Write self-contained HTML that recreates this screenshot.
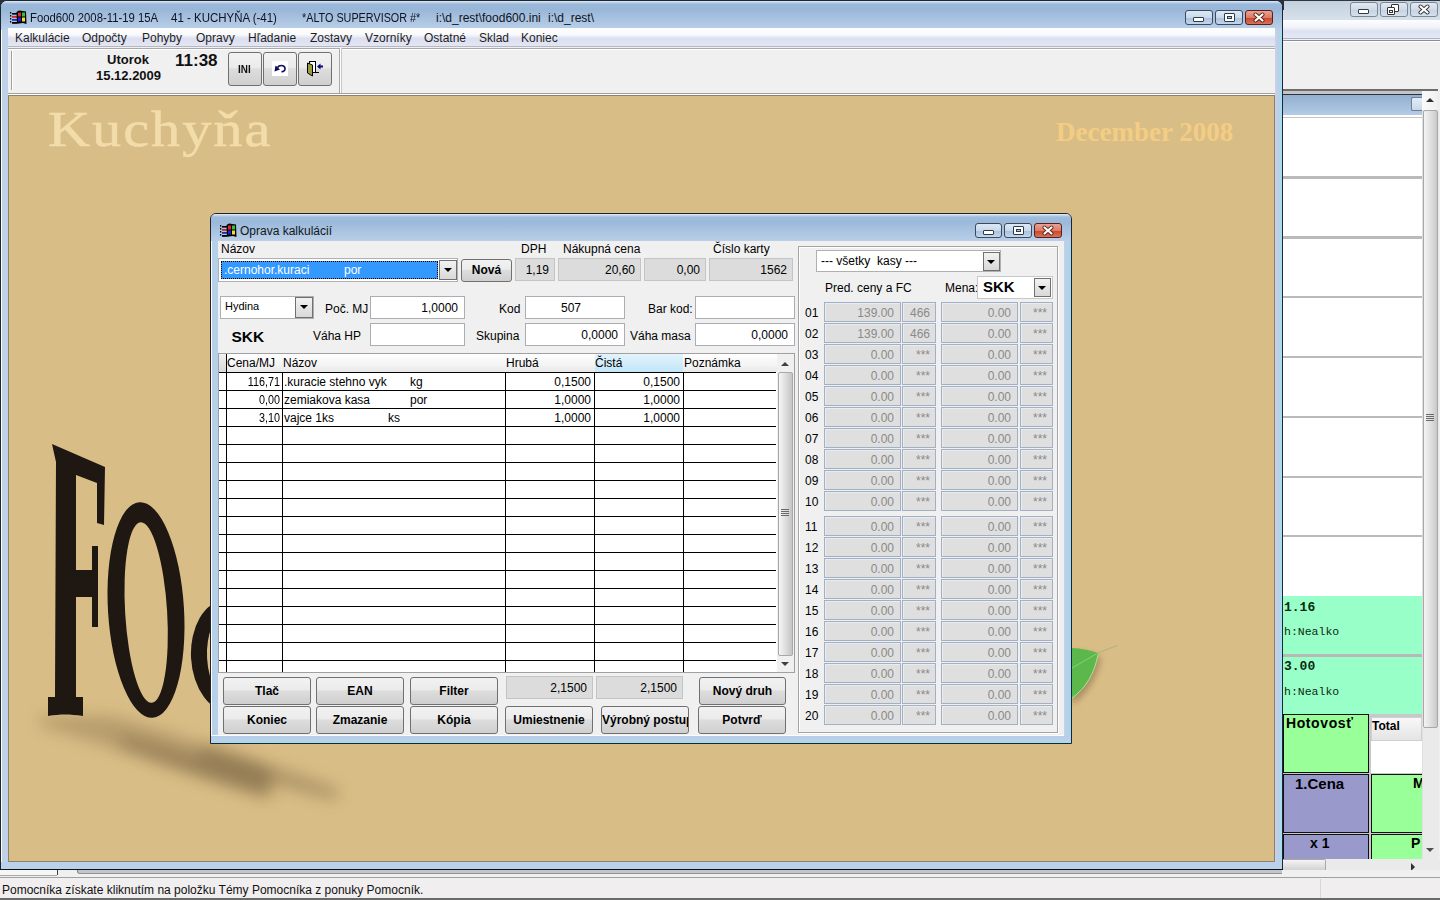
<!DOCTYPE html>
<html><head><meta charset="utf-8"><style>
*{box-sizing:border-box;margin:0;padding:0}
html,body{width:1440px;height:900px;overflow:hidden;background:#f0f0f0;font-family:"Liberation Sans",sans-serif;font-size:12px;color:#000}
.a{position:absolute}
.t{position:absolute;white-space:pre;line-height:1}
.btn{position:absolute;border:1px solid #707070;border-radius:3px;background:linear-gradient(#f2f2f2 0%,#ebebeb 45%,#dddddd 50%,#cfcfcf 100%);font-weight:bold;font-size:12px;text-align:center;white-space:pre;overflow:hidden}
.inp{position:absolute;background:#fff;border:1px solid #abadb3;border-top-color:#abadb3}
.ro{position:absolute;background:#dcdcdc;border:1px solid #c4c4c4}
.pb{position:absolute;background:#dfdfdf;border:1px solid #a3afc2;box-shadow:inset 1px 1px 0 #e8ecf3;color:#8a8a8a;font-size:12px;text-align:right;white-space:pre}
.cap{position:absolute;border:1px solid #3c4a5c;border-radius:3px;background:linear-gradient(#dce8f5 0%,#c9d9ec 50%,#a9c0dc 52%,#c3d6ec 100%)}
.capx{position:absolute;border:1px solid #5a1f16;border-radius:3px;background:linear-gradient(#eaa393 0%,#dc7b66 50%,#c8452a 52%,#d9735a 100%)}
</style></head><body>
<div class="a" style="left:1282px;top:0px;width:158px;height:877px;background:#f0f0f0"></div>
<div class="a" style="left:1282px;top:0px;width:158px;height:1px;background:#30363f"></div>
<div class="a" style="left:1282px;top:1px;width:158px;height:19px;background:linear-gradient(#c4d0de,#d6e1ea)"></div>
<div class="a" style="left:1282px;top:20px;width:158px;height:19px;background:linear-gradient(#fcfdff 0%,#f3f5fa 35%,#dde2f1 60%,#e6e9f7 100%)"></div>
<div class="a" style="left:1282px;top:38px;width:158px;height:1px;background:#b0b4bc"></div>
<div class="a" style="left:1282px;top:39px;width:158px;height:1px;background:#eef0f4"></div>
<div class="a" style="left:1282px;top:40px;width:158px;height:1px;background:#8a8e92"></div>
<div class="a" style="left:1282px;top:41px;width:158px;height:1px;background:#ffffff"></div>
<div class="a" style="left:1282px;top:42px;width:158px;height:48px;background:#f0f0f0"></div>
<div class="a" style="left:1282px;top:89px;width:156px;height:2px;background:#6d6d6d"></div>
<div class="a" style="left:1282px;top:91px;width:140px;height:3px;background:#c4c4c4"></div>
<div class="a" style="left:1282px;top:94px;width:140px;height:1px;background:#2b3440"></div>
<div class="a" style="left:1282px;top:95px;width:140px;height:20px;background:linear-gradient(#93aed0,#b3cbe5)"></div>
<div class="a" style="left:1282px;top:115px;width:140px;height:2px;background:#fff"></div>
<div class="a" style="left:1282px;top:117px;width:140px;height:1px;background:#c8c4bd"></div>
<div class="a" style="left:1282px;top:118px;width:140px;height:478px;background:#fff"></div>
<div class="a" style="left:1283px;top:176px;width:139px;height:3px;background:#bababa"></div>
<div class="a" style="left:1283px;top:236px;width:139px;height:3px;background:#bababa"></div>
<div class="a" style="left:1283px;top:296px;width:139px;height:2px;background:#bababa"></div>
<div class="a" style="left:1283px;top:356px;width:139px;height:2px;background:#bababa"></div>
<div class="a" style="left:1283px;top:416px;width:139px;height:2px;background:#bababa"></div>
<div class="a" style="left:1283px;top:476px;width:139px;height:2px;background:#bababa"></div>
<div class="a" style="left:1283px;top:535px;width:139px;height:2px;background:#bababa"></div>
<div class="a" style="left:1283px;top:596px;width:139px;height:58px;background:#99ffc8"></div>
<div class="a" style="left:1283px;top:654px;width:139px;height:3px;background:#b8b8b8"></div>
<div class="a" style="left:1283px;top:657px;width:139px;height:57px;background:#99ffc8"></div>
<div class="t" style="left:1284px;top:601px;font-family:'Liberation Mono';font-weight:bold;font-size:13px;color:#0a2a10">1.16</div>
<div class="t" style="left:1284px;top:626px;font-family:'Liberation Mono';font-size:11.5px;color:#0a2a10">h:Nealko</div>
<div class="t" style="left:1284px;top:660px;font-family:'Liberation Mono';font-weight:bold;font-size:13px;color:#0a2a10">3.00</div>
<div class="t" style="left:1284px;top:686px;font-family:'Liberation Mono';font-size:11.5px;color:#0a2a10">h:Nealko</div>
<div class="a" style="left:1283px;top:714px;width:139px;height:146px;background:#c8c8c8"></div>
<div class="a" style="left:1283px;top:714px;width:86px;height:59px;background:#99ff99;border:1px solid #111"></div>
<div class="t" style="left:1286px;top:716px;font-weight:bold;font-size:14px;letter-spacing:0.6px">Hotovosť</div>
<div class="a" style="left:1371px;top:717px;width:51px;height:24px;background:linear-gradient(#f8f8f8,#e4e4e4);border:1px solid #d0d0d0"></div>
<div class="t" style="left:1372px;top:720px;font-weight:bold;font-size:12px">Total</div>
<div class="a" style="left:1371px;top:741px;width:51px;height:32px;background:#fff"></div>
<div class="a" style="left:1283px;top:774px;width:86px;height:59px;background:#9999cc;border:1px solid #111"></div>
<div class="t" style="left:1295px;top:776px;font-weight:bold;font-size:15px">1.Cena</div>
<div class="a" style="left:1371px;top:774px;width:51px;height:59px;background:#99ff99;border:1px solid #111;border-right:none"></div>
<div class="t" style="left:1413px;top:776px;font-weight:bold;font-size:14px">M</div>
<div class="a" style="left:1283px;top:834px;width:86px;height:27px;background:#9999cc;border:1px solid #111;border-bottom:none"></div>
<div class="t" style="left:1310px;top:836px;font-weight:bold;font-size:14px">x 1</div>
<div class="a" style="left:1371px;top:834px;width:51px;height:27px;background:#99ff99;border:1px solid #111;border-right:none;border-bottom:none"></div>
<div class="t" style="left:1411px;top:836px;font-weight:bold;font-size:14px">P</div>
<div class="a" style="left:1422px;top:91px;width:17px;height:769px;background:#eaeaea;border-left:1px solid #e0e0e0"></div>
<div class="a" style="left:1423px;top:110px;width:15px;height:618px;background:linear-gradient(90deg,#f4f4f4,#dcdcdc 60%,#c8c8c8);border:1px solid #a8a8a8;border-radius:2px"></div>
<div class="a" style="left:1422px;top:91px;width:16px;height:19px;background:linear-gradient(90deg,#fafafa,#f0f0f0)"></div>
<div class="a" style="left:1426px;top:414px;width:8px;height:1px;background:#6a6a6a"></div>
<div class="a" style="left:1426px;top:416px;width:8px;height:1px;background:#6a6a6a"></div>
<div class="a" style="left:1426px;top:418px;width:8px;height:1px;background:#6a6a6a"></div>
<div class="a" style="left:1426px;top:420px;width:8px;height:1px;background:#6a6a6a"></div>
<div class="a" style="left:1426px;top:98px;width:0;height:0;border-left:4px solid transparent;border-right:4px solid transparent;border-bottom:4px solid #303030"></div>
<div class="a" style="left:1426px;top:848px;width:0;height:0;border-left:4px solid transparent;border-right:4px solid transparent;border-top:4px solid #505050"></div>
<div class="a" style="left:1411px;top:97px;width:11px;height:14px;background:linear-gradient(#e4ecf6,#c8d8ea);border:1px solid #6f8199;border-right:none;border-radius:2px 0 0 2px"></div>
<div class="a" style="left:1282px;top:859px;width:158px;height:16px;background:#eaeaea"></div>
<div class="a" style="left:1282px;top:859px;width:44px;height:15px;background:linear-gradient(#f4f4f4,#dadada 60%,#c8c8c8);border:1px solid #a8a8a8;border-left:none;border-radius:0 2px 2px 0"></div>
<div class="a" style="left:1411px;top:863px;width:0;height:0;border-top:4px solid transparent;border-bottom:4px solid transparent;border-left:4px solid #303030"></div>
<div class="cap" style="left:1350px;top:2px;width:28px;height:15px;border-color:#7b8796;background:linear-gradient(#e2e9f1,#d0dbe7 50%,#c4d2e1 52%,#d6e1ec)"></div>
<div class="cap" style="left:1380px;top:2px;width:28px;height:15px;border-color:#7b8796;background:linear-gradient(#e2e9f1,#d0dbe7 50%,#c4d2e1 52%,#d6e1ec)"></div>
<div class="cap" style="left:1410px;top:2px;width:28px;height:15px;border-color:#7b8796;background:linear-gradient(#e2e9f1,#d0dbe7 50%,#c4d2e1 52%,#d6e1ec)"></div>
<div class="a" style="left:1358px;top:9px;width:11px;height:5px;background:#fff;border:1px solid #2c3a4c;border-radius:1px"></div>
<div class="a" style="left:1391px;top:4px;width:8px;height:8px;background:#fff;border:1.5px solid #333;border-radius:1px"></div>
<div class="a" style="left:1387px;top:7px;width:8px;height:8px;background:#fff;border:1.5px solid #333;border-radius:1px"></div>
<div class="a" style="left:1389px;top:10px;width:4px;height:3px;background:#fff;border:1px solid #333"></div>
<svg class="a" style="left:1418px;top:4px" width="12" height="11" viewBox="0 0 12 11"><path d="M2.5,2.5 L9.5,8.5 M9.5,2.5 L2.5,8.5" stroke="#333" stroke-width="4" stroke-linecap="round"/><path d="M2.5,2.5 L9.5,8.5 M9.5,2.5 L2.5,8.5" stroke="#fff" stroke-width="2.2" stroke-linecap="round"/></svg>
<div class="a" style="left:0px;top:0px;width:10px;height:10px;background:#2a3038"></div>
<div class="a" style="left:1272px;top:0px;width:12px;height:10px;background:#2a3038"></div>
<div class="a" style="left:0px;top:0px;width:1283px;height:870px;background:#b9d1ea;border:1px solid #1d2633;border-radius:7px 7px 0 0"></div>
<div class="a" style="left:1px;top:1px;width:1281px;height:28px;background:linear-gradient(#dfe9f4 0px,#9cb9da 3px,#98b6d8 8px,#b8cee8 27px);border-radius:6px 6px 0 0"></div>
<div class="a" style="left:1px;top:30px;width:7px;height:840px;background:linear-gradient(90deg,#ffffff 0,#ffffff 1px,#bdd3e3 1px,#bfd0ee 7px)"></div>
<div class="a" style="left:1275px;top:30px;width:7px;height:840px;background:linear-gradient(90deg,#c9d2e4,#b8cfe8 50%,#a3e0f4)"></div>
<div class="a" style="left:1px;top:862px;width:1281px;height:7px;background:#b9d1ea"></div>
<div class="a" style="left:0px;top:869px;width:1283px;height:1px;background:#111"></div>
<div class="a" style="left:8px;top:28px;width:1267px;height:19px;background:linear-gradient(#ffffff 0%,#f8f9fc 35%,#dcdff0 55%,#e4e6f4 100%)"></div>
<div class="a" style="left:8px;top:46px;width:1267px;height:1px;background:#b4b8c0"></div>
<div class="a" style="left:8px;top:47px;width:1267px;height:48px;background:#f0f0f0"></div>
<div class="a" style="left:8px;top:48px;width:1267px;height:1px;background:#a8a8a8"></div>
<div class="a" style="left:8px;top:49px;width:1267px;height:1px;background:#ffffff"></div>
<div class="a" style="left:11px;top:51px;width:2px;height:39px;background:linear-gradient(90deg,#a0a0a0 50%,#fff 50%)"></div>
<div class="a" style="left:339px;top:48px;width:1px;height:46px;background:#a8a8a8"></div>
<div class="a" style="left:340px;top:48px;width:1px;height:46px;background:#fff"></div>
<div class="a" style="left:341px;top:48px;width:1px;height:46px;background:#c8c8c8"></div>
<div class="a" style="left:8px;top:93px;width:1267px;height:1px;background:#a0a0a0"></div>
<div class="a" style="left:8px;top:94px;width:1267px;height:1px;background:#fff"></div>
<div class="a" style="left:8px;top:95px;width:1267px;height:767px;background:#d9bd86;border:1px solid #8f8168"></div>
<div class="t" style="left:48px;top:104px;font-family:'Liberation Serif';font-size:50px;letter-spacing:1.6px;color:#f2dcaa;transform:scaleX(1.17);transform-origin:0 0;-webkit-text-stroke:0.5px #f2dcaa">Kuchyňa</div>
<div class="t" style="left:1056px;top:118.5px;font-family:'Liberation Serif';font-weight:bold;font-size:27px;color:#f4cd84">December 2008</div>
<svg class="a" style="left:0;top:0" width="1280" height="870" viewBox="0 0 1280 870">
<defs>
<filter id="blur8" x="-50%" y="-50%" width="200%" height="200%"><feGaussianBlur stdDeviation="8"/></filter>
<filter id="blur3" x="-50%" y="-50%" width="200%" height="200%"><feGaussianBlur stdDeviation="3"/></filter>
</defs>
<path d="M40,716 L110,716 C160,728 220,748 270,770 L270,800 C200,780 120,748 40,726 Z" fill="#7a6440" opacity="0.35" filter="url(#blur8)"/>
<path d="M120,735 C170,748 220,762 270,778 L270,795 C220,782 170,765 120,745 Z" fill="#5e4c30" opacity="0.35" filter="url(#blur8)"/>
<path d="M200,745 C240,755 290,770 340,790 L335,800 C290,790 240,775 200,760 Z" fill="#5e4c30" opacity="0.35" filter="url(#blur8)"/>
<path fill="#1e1712" d="M52,444 L105,467 L104,525 L97,523 L97,483 L76,475 L76,570 L92,570 L92,546 L98,546 L98,627 L92,627 L92,597 L76,597 L76,697 L83,697 L83,716 C70,714 60,714 48,716 L48,697 L55,697 L56,462 Z"/>
<g transform="rotate(-3.5 146 610)"><ellipse cx="146" cy="610" rx="38" ry="108" fill="#1e1712"/><ellipse cx="146" cy="612.5" rx="21" ry="90.5" fill="#d9bd86"/></g>
<g transform="rotate(-3 228 656)"><ellipse cx="228" cy="656" rx="37" ry="56" fill="#1e1712"/><ellipse cx="229" cy="657" rx="22" ry="44" fill="#d9bd86"/></g>
<path d="M1072,652 C1082,652 1092,654 1101,657 C1098,676 1088,694 1072,705 Z" fill="#6e5a3a" opacity="0.45" filter="url(#blur3)"/>
<path fill="#5db84c" d="M1070,648 C1080,648 1090,650 1098,653 C1095,672 1085,690 1070,700 Z"/>
<path d="M1098,653 L1118,645" stroke="#a9b77a" stroke-width="1" fill="none"/>
<path d="M1072,668 L1098,653" stroke="#86cf78" stroke-width="1" fill="none"/>
<path d="M1072,698 C1086,688 1094,674 1098,655" stroke="#a8e39a" stroke-width="1" fill="none"/>
</svg>
<svg class="a" style="left:10px;top:10px" width="17" height="15" viewBox="0 0 17 15">
<rect x="0" y="2" width="1.3" height="1.6" fill="#000"/><rect x="0" y="5" width="1.3" height="1.6" fill="#000"/><rect x="0" y="8" width="1.3" height="1.6" fill="#000"/><rect x="0" y="11" width="1.3" height="1.6" fill="#000"/>
<rect x="2" y="3" width="5" height="1.6" fill="#000"/><rect x="2" y="6" width="5" height="1.8" fill="#d42020"/><rect x="2" y="9" width="5" height="1.8" fill="#1c2cb0"/><rect x="2" y="12" width="5" height="1.8" fill="#000"/>
<path d="M6.5,2 L9,0.5 L16,1.5 L16.5,14 L13,13 L7,13.8 Z" fill="#000"/>
<rect x="8" y="2.5" width="3" height="4" fill="#e02828"/><rect x="12" y="2.5" width="3" height="4" fill="#30c040"/>
<rect x="8" y="7.5" width="3" height="4" fill="#2020c8"/><rect x="12" y="7.5" width="3" height="4" fill="#f0e030"/>
</svg>
<div class="t" style="left:30px;top:12px;font-size:12px;color:#0c1420;transform:scaleX(0.942);transform-origin:0 0">Food600 2008-11-19 15A</div>
<div class="t" style="left:171px;top:12px;font-size:12px;color:#0c1420;transform:scaleX(0.957);transform-origin:0 0">41 - KUCHYŇA (-41)</div>
<div class="t" style="left:302px;top:12px;font-size:12px;color:#0c1420;transform:scaleX(0.9);transform-origin:0 0">*ALTO SUPERVISOR #*</div>
<div class="t" style="left:436px;top:12px;font-size:12px;color:#0c1420;transform:scaleX(1.0);transform-origin:0 0">i:\d_rest\food600.ini</div>
<div class="t" style="left:548px;top:12px;font-size:12px;color:#0c1420;transform:scaleX(1.0);transform-origin:0 0">i:\d_rest\</div>
<div class="t" style="left:15px;top:32px;font-size:12px;color:#1e1e1e">Kalkulácie</div>
<div class="t" style="left:82px;top:32px;font-size:12px;color:#1e1e1e">Odpočty</div>
<div class="t" style="left:142px;top:32px;font-size:12px;color:#1e1e1e">Pohyby</div>
<div class="t" style="left:196px;top:32px;font-size:12px;color:#1e1e1e">Opravy</div>
<div class="t" style="left:248px;top:32px;font-size:12px;color:#1e1e1e">Hľadanie</div>
<div class="t" style="left:310px;top:32px;font-size:12px;color:#1e1e1e">Zostavy</div>
<div class="t" style="left:365px;top:32px;font-size:12px;color:#1e1e1e">Vzorníky</div>
<div class="t" style="left:424px;top:32px;font-size:12px;color:#1e1e1e">Ostatné</div>
<div class="t" style="left:479px;top:32px;font-size:12px;color:#1e1e1e">Sklad</div>
<div class="t" style="left:521px;top:32px;font-size:12px;color:#1e1e1e">Koniec</div>
<div class="cap" style="left:1185px;top:10px;width:28px;height:15px"></div>
<div class="cap" style="left:1215px;top:10px;width:28px;height:15px"></div>
<div class="capx" style="left:1245px;top:10px;width:28px;height:15px"></div>
<div class="a" style="left:1193px;top:17px;width:11px;height:5px;background:#fff;border:1px solid #2c3a4c;border-radius:1px"></div>
<div class="a" style="left:1224px;top:13px;width:11px;height:9px;background:#fff;border:1px solid #2c3a4c;border-radius:1px"></div>
<div class="a" style="left:1227px;top:16px;width:5px;height:3px;background:#b8c8dc;border:1px solid #2c3a4c"></div>
<svg class="a" style="left:1253px;top:12px" width="12" height="11" viewBox="0 0 12 11"><path d="M2.5,2.5 L9.5,8.5 M9.5,2.5 L2.5,8.5" stroke="#5a2418" stroke-width="4" stroke-linecap="round"/><path d="M2.5,2.5 L9.5,8.5 M9.5,2.5 L2.5,8.5" stroke="#fff" stroke-width="2.2" stroke-linecap="round"/></svg>
<div class="t" style="left:107px;top:53px;font-weight:bold;font-size:13px;color:#111">Utorok</div>
<div class="t" style="left:96px;top:69px;font-weight:bold;font-size:13px;color:#111">15.12.2009</div>
<div class="t" style="left:175px;top:52px;font-weight:bold;font-size:17px;color:#111">11:38</div>
<div class="btn" style="left:228px;top:52px;width:34px;height:34px"></div>
<div class="btn" style="left:263px;top:52px;width:34px;height:34px"></div>
<div class="btn" style="left:298px;top:52px;width:34px;height:34px"></div>
<div class="t" style="left:238px;top:64px;font-weight:bold;font-size:11px;color:#111;transform:scaleX(0.9);transform-origin:0 0">INI</div>
<div class="a" style="left:272px;top:61px;width:16px;height:15px;background:#fff"></div>
<svg class="a" style="left:272px;top:61px" width="16" height="15" viewBox="0 0 16 15"><path d="M5.5,6.5 C7,4 12,3.5 13,7 C13.6,9.5 11,11 9.5,10.5" stroke="#0a0a60" stroke-width="1.6" fill="none"/><path d="M2.5,10.5 L3.5,4.5 L8,8.5 Z" fill="#0a0a60"/></svg>
<svg class="a" style="left:306px;top:60px" width="19" height="17" viewBox="0 0 19 17"><rect x="3.5" y="1.5" width="6" height="11" fill="#fff" stroke="#000" stroke-width="1"/><path d="M9.5,12.5 L13,12.5" stroke="#000" stroke-width="1"/><path d="M1.5,3 L6.5,5 L6.5,16 L1.5,13 Z" fill="#9c9c3a" stroke="#000" stroke-width="1"/><path d="M17,6.5 L13,6.5" stroke="#0a0a80" stroke-width="2"/><path d="M11,6.5 L14.5,3.5 L14.5,9.5 Z" fill="#0a0a80"/></svg>
<div class="a" style="left:210px;top:213px;width:862px;height:531px;background:#b7d0ea;border:1px solid #1c2530;border-radius:6px 6px 0 0"></div>
<div class="a" style="left:211px;top:214px;width:860px;height:27px;background:linear-gradient(#e4edf6 0px,#a0bcdc 3px,#9cb9da 8px,#b9cfe8 27px);border-radius:5px 5px 0 0"></div>
<div class="a" style="left:218px;top:241px;width:846px;height:495px;background:#f0f0f0"></div>
<div class="a" style="left:211px;top:241px;width:1px;height:495px;background:#fff"></div>
<div class="a" style="left:211px;top:735px;width:860px;height:1px;background:#fbfbfb"></div>
<div class="a" style="left:211px;top:736px;width:860px;height:7px;background:linear-gradient(#b9cde7,#b6d4ec 60%,#a6dcf0)"></div>
<div class="a" style="left:1064px;top:241px;width:7px;height:495px;background:linear-gradient(90deg,#bfd2ea,#b5d0ea 60%,#9fd8ee)"></div>
<div class="t" style="left:240px;top:225px;font-size:12px;color:#101820">Oprava kalkulácií</div>
<div class="cap" style="left:975px;top:223px;width:27px;height:15px"></div>
<div class="cap" style="left:1004px;top:223px;width:28px;height:15px"></div>
<div class="capx" style="left:1034px;top:223px;width:28px;height:15px"></div>
<div class="a" style="left:983px;top:230px;width:11px;height:5px;background:#fff;border:1px solid #2c3a4c;border-radius:1px"></div>
<div class="a" style="left:1013px;top:226px;width:11px;height:9px;background:#fff;border:1px solid #2c3a4c;border-radius:1px"></div>
<div class="a" style="left:1016px;top:229px;width:5px;height:3px;background:#b8c8dc;border:1px solid #2c3a4c"></div>
<svg class="a" style="left:1042px;top:225px" width="12" height="11" viewBox="0 0 12 11"><path d="M2.5,2.5 L9.5,8.5 M9.5,2.5 L2.5,8.5" stroke="#5a2418" stroke-width="4" stroke-linecap="round"/><path d="M2.5,2.5 L9.5,8.5 M9.5,2.5 L2.5,8.5" stroke="#fff" stroke-width="2.2" stroke-linecap="round"/></svg>
<svg class="a" style="left:220px;top:223px" width="17" height="15" viewBox="0 0 17 15">
<rect x="0" y="2" width="1.3" height="1.6" fill="#000"/><rect x="0" y="5" width="1.3" height="1.6" fill="#000"/><rect x="0" y="8" width="1.3" height="1.6" fill="#000"/><rect x="0" y="11" width="1.3" height="1.6" fill="#000"/>
<rect x="2" y="3" width="5" height="1.6" fill="#000"/><rect x="2" y="6" width="5" height="1.8" fill="#d42020"/><rect x="2" y="9" width="5" height="1.8" fill="#1c2cb0"/><rect x="2" y="12" width="5" height="1.8" fill="#000"/>
<path d="M6.5,2 L9,0.5 L16,1.5 L16.5,14 L13,13 L7,13.8 Z" fill="#000"/>
<rect x="8" y="2.5" width="3" height="4" fill="#e02828"/><rect x="12" y="2.5" width="3" height="4" fill="#30c040"/>
<rect x="8" y="7.5" width="3" height="4" fill="#2020c8"/><rect x="12" y="7.5" width="3" height="4" fill="#f0e030"/>
</svg>
<div class="t" style="left:221px;top:243px;">Názov</div>
<div class="t" style="left:521px;top:243px;">DPH</div>
<div class="t" style="left:563px;top:243px;">Nákupná cena</div>
<div class="t" style="left:713px;top:243px;">Číslo karty</div>
<div class="a" style="left:218px;top:258px;width:240px;height:24px;background:#fff;border:1px solid #b0b0b0"></div>
<div class="a" style="left:221px;top:261px;width:217px;height:18px;background:#3399ff;outline:1px dotted #000;outline-offset:-1px"></div>
<div class="t" style="left:224px;top:264px;color:#fff">.cernohor.kuraci</div>
<div class="t" style="left:344px;top:264px;color:#fff">por</div>
<div class="a" style="left:439px;top:260px;width:18px;height:20px;background:linear-gradient(#f2f2f2,#d8d8d8);border:1px solid #707070"></div>
<div class="a" style="left:444px;top:268px;width:0;height:0;border-left:4px solid transparent;border-right:4px solid transparent;border-top:4px solid #000"></div>
<div class="btn" style="left:461px;top:259px;width:51px;height:23px;line-height:21px">Nová</div>
<div class="ro" style="left:515px;top:258px;width:40px;height:23px;text-align:right;padding-right:5px;line-height:23px">1,19</div>
<div class="ro" style="left:558px;top:258px;width:83px;height:23px;text-align:right;padding-right:5px;line-height:23px">20,60</div>
<div class="ro" style="left:644px;top:258px;width:62px;height:23px;text-align:right;padding-right:5px;line-height:23px">0,00</div>
<div class="ro" style="left:709px;top:258px;width:84px;height:23px;text-align:right;padding-right:5px;line-height:23px">1562</div>
<div class="a" style="left:220px;top:296px;width:94px;height:23px;background:#fff;border:1px solid #b0b0b0"></div>
<div class="t" style="left:225px;top:301px;font-size:11px">Hydina</div>
<div class="a" style="left:295px;top:297px;width:18px;height:21px;background:linear-gradient(#f2f2f2,#d8d8d8);border:1px solid #707070"></div>
<div class="a" style="left:300px;top:305px;width:0;height:0;border-left:4px solid transparent;border-right:4px solid transparent;border-top:4px solid #000"></div>
<div class="t" style="left:325px;top:303px;">Poč. MJ</div>
<div class="t" style="left:313px;top:330px;">Váha HP</div>
<div class="t" style="left:231.5px;top:329px;font-weight:bold;font-size:15.5px">SKK</div>
<div class="inp" style="left:370px;top:296px;width:95px;height:23px;text-align:right;padding-right:6px;line-height:23px">1,0000</div>
<div class="inp" style="left:370px;top:323px;width:95px;height:23px"></div>
<div class="t" style="left:499px;top:303px;">Kod</div>
<div class="t" style="left:476px;top:330px;">Skupina</div>
<div class="inp" style="left:525px;top:296px;width:100px;height:23px;text-align:center;padding-right:8px;line-height:23px">507</div>
<div class="inp" style="left:525px;top:323px;width:100px;height:23px;text-align:right;padding-right:6px;line-height:23px">0,0000</div>
<div class="t" style="left:648px;top:303px;">Bar kod:</div>
<div class="t" style="left:630px;top:330px;">Váha masa</div>
<div class="inp" style="left:695px;top:296px;width:100px;height:23px"></div>
<div class="inp" style="left:695px;top:323px;width:100px;height:23px;text-align:right;padding-right:6px;line-height:23px">0,0000</div>
<div class="a" style="left:218px;top:353px;width:577px;height:320px;background:#fff;border:1px solid #a0a0a0"></div>
<div class="a" style="left:219px;top:354px;width:575px;height:18px;background:linear-gradient(#ffffff,#f4f4f4 60%,#e8e8e8)"></div>
<div class="a" style="left:219px;top:354px;width:7px;height:18px;background:linear-gradient(#f0f0f0,#d8d8d8)"></div>
<div class="a" style="left:595px;top:354px;width:88px;height:18px;background:linear-gradient(#e3f4fc,#c2e6f9)"></div>
<div class="t" style="left:227px;top:357px;">Cena/MJ</div>
<div class="t" style="left:283px;top:357px;">Názov</div>
<div class="t" style="left:506px;top:357px;">Hrubá</div>
<div class="t" style="left:595px;top:357px;">Čistá</div>
<div class="t" style="left:684px;top:357px;">Poznámka</div>
<div class="a" style="left:219px;top:372px;width:557px;height:1px;background:#000"></div>
<div class="a" style="left:219px;top:390px;width:557px;height:1px;background:#000"></div>
<div class="a" style="left:219px;top:408px;width:557px;height:1px;background:#000"></div>
<div class="a" style="left:219px;top:426px;width:557px;height:1px;background:#000"></div>
<div class="a" style="left:219px;top:444px;width:557px;height:1px;background:#000"></div>
<div class="a" style="left:219px;top:462px;width:557px;height:1px;background:#000"></div>
<div class="a" style="left:219px;top:480px;width:557px;height:1px;background:#000"></div>
<div class="a" style="left:219px;top:498px;width:557px;height:1px;background:#000"></div>
<div class="a" style="left:219px;top:516px;width:557px;height:1px;background:#000"></div>
<div class="a" style="left:219px;top:534px;width:557px;height:1px;background:#000"></div>
<div class="a" style="left:219px;top:552px;width:557px;height:1px;background:#000"></div>
<div class="a" style="left:219px;top:570px;width:557px;height:1px;background:#000"></div>
<div class="a" style="left:219px;top:588px;width:557px;height:1px;background:#000"></div>
<div class="a" style="left:219px;top:606px;width:557px;height:1px;background:#000"></div>
<div class="a" style="left:219px;top:624px;width:557px;height:1px;background:#000"></div>
<div class="a" style="left:219px;top:642px;width:557px;height:1px;background:#000"></div>
<div class="a" style="left:219px;top:660px;width:557px;height:1px;background:#000"></div>
<div class="a" style="left:226px;top:372px;width:1px;height:300px;background:#000"></div>
<div class="a" style="left:282px;top:372px;width:1px;height:300px;background:#000"></div>
<div class="a" style="left:505px;top:372px;width:1px;height:300px;background:#000"></div>
<div class="a" style="left:594px;top:372px;width:1px;height:300px;background:#000"></div>
<div class="a" style="left:683px;top:372px;width:1px;height:300px;background:#000"></div>
<div class="a" style="left:226px;top:354px;width:1px;height:18px;background:#000"></div>
<div class="t" style="left:226px;top:376px;width:54px;text-align:right;font-size:12px;transform:scaleX(0.9);transform-origin:100% 0">116,71</div>
<div class="t" style="left:284px;top:376px;">.kuracie stehno vyk</div>
<div class="t" style="left:410px;top:376px;">kg</div>
<div class="t" style="left:505px;top:376px;width:86px;text-align:right">0,1500</div>
<div class="t" style="left:594px;top:376px;width:86px;text-align:right">0,1500</div>
<div class="t" style="left:226px;top:394px;width:54px;text-align:right;font-size:12px;transform:scaleX(0.9);transform-origin:100% 0">0,00</div>
<div class="t" style="left:284px;top:394px;">zemiakova kasa</div>
<div class="t" style="left:410px;top:394px;">por</div>
<div class="t" style="left:505px;top:394px;width:86px;text-align:right">1,0000</div>
<div class="t" style="left:594px;top:394px;width:86px;text-align:right">1,0000</div>
<div class="t" style="left:226px;top:412px;width:54px;text-align:right;font-size:12px;transform:scaleX(0.9);transform-origin:100% 0">3,10</div>
<div class="t" style="left:284px;top:412px;">vajce 1ks</div>
<div class="t" style="left:388px;top:412px;">ks</div>
<div class="t" style="left:505px;top:412px;width:86px;text-align:right">1,0000</div>
<div class="t" style="left:594px;top:412px;width:86px;text-align:right">1,0000</div>
<div class="a" style="left:777px;top:354px;width:17px;height:318px;background:#f0f0f0"></div>
<div class="a" style="left:781px;top:362px;width:0;height:0;border-left:4px solid transparent;border-right:4px solid transparent;border-bottom:4px solid #404040"></div>
<div class="a" style="left:778px;top:372px;width:15px;height:284px;background:linear-gradient(90deg,#f6f6f6,#dcdcdc 55%,#c4c4c4);border:1px solid #a8a8a8;border-radius:2px"></div>
<div class="a" style="left:781px;top:662px;width:0;height:0;border-left:4px solid transparent;border-right:4px solid transparent;border-top:4px solid #404040"></div>
<div class="a" style="left:781px;top:509px;width:8px;height:1px;background:#6a6a6a"></div>
<div class="a" style="left:781px;top:511px;width:8px;height:1px;background:#6a6a6a"></div>
<div class="a" style="left:781px;top:513px;width:8px;height:1px;background:#6a6a6a"></div>
<div class="a" style="left:781px;top:515px;width:8px;height:1px;background:#6a6a6a"></div>
<div class="btn" style="left:223px;top:677px;width:88px;height:28px;line-height:26px">Tlač</div>
<div class="btn" style="left:316px;top:677px;width:88px;height:28px;line-height:26px">EAN</div>
<div class="btn" style="left:410px;top:677px;width:88px;height:28px;line-height:26px">Filter</div>
<div class="btn" style="left:223px;top:706px;width:88px;height:28px;line-height:26px">Koniec</div>
<div class="btn" style="left:316px;top:706px;width:88px;height:28px;line-height:26px">Zmazanie</div>
<div class="btn" style="left:410px;top:706px;width:88px;height:28px;line-height:26px">Kópia</div>
<div class="btn" style="left:699px;top:677px;width:87px;height:28px;line-height:26px">Nový druh</div>
<div class="btn" style="left:505px;top:706px;width:88px;height:28px;line-height:26px">Umiestnenie</div>
<div class="btn" style="left:601px;top:706px;width:88px;height:28px;line-height:26px">Výrobný postup</div>
<div class="btn" style="left:698px;top:706px;width:88px;height:28px;line-height:26px">Potvrď</div>
<div class="ro" style="left:506px;top:676px;width:87px;height:23px;text-align:right;padding-right:5px;line-height:23px">2,1500</div>
<div class="ro" style="left:596px;top:676px;width:87px;height:23px;text-align:right;padding-right:5px;line-height:23px">2,1500</div>
<div class="a" style="left:798px;top:246px;width:260px;height:487px;border:1px solid #a4a4a4;box-shadow:inset 1px 1px 0 #fff,1px 1px 0 #fff"></div>
<div class="a" style="left:816px;top:250px;width:185px;height:22px;background:#fff;border:1px solid #b0b0b0"></div>
<div class="t" style="left:821px;top:255px;">--- všetky  kasy ---</div>
<div class="a" style="left:983px;top:252px;width:17px;height:19px;background:linear-gradient(#f2f2f2,#d8d8d8);border:1px solid #707070"></div>
<div class="a" style="left:987px;top:260px;width:0;height:0;border-left:4px solid transparent;border-right:4px solid transparent;border-top:4px solid #000"></div>
<div class="t" style="left:825px;top:282px;">Pred. ceny a FC</div>
<div class="t" style="left:945px;top:282px;">Mena:</div>
<div class="a" style="left:977px;top:276px;width:76px;height:23px;background:#fff;border:1px solid #c8c8c8"></div>
<div class="t" style="left:983px;top:279px;font-weight:bold;font-size:15px">SKK</div>
<div class="a" style="left:1034px;top:278px;width:17px;height:19px;background:linear-gradient(#f2f2f2,#d8d8d8);border:1px solid #707070"></div>
<div class="a" style="left:1038px;top:286px;width:0;height:0;border-left:4px solid transparent;border-right:4px solid transparent;border-top:4px solid #000"></div>
<div class="t" style="left:805px;top:307px;">01</div>
<div class="pb" style="left:824px;top:302px;width:77px;height:20px;padding-right:6px;line-height:21px">139.00</div>
<div class="pb" style="left:902px;top:302px;width:34px;height:20px;padding-right:5px;line-height:21px">466</div>
<div class="pb" style="left:941px;top:302px;width:77px;height:20px;padding-right:6px;line-height:21px">0.00</div>
<div class="pb" style="left:1020px;top:302px;width:33px;height:20px;padding-right:5px;line-height:21px">***</div>
<div class="t" style="left:805px;top:328px;">02</div>
<div class="pb" style="left:824px;top:323px;width:77px;height:20px;padding-right:6px;line-height:21px">139.00</div>
<div class="pb" style="left:902px;top:323px;width:34px;height:20px;padding-right:5px;line-height:21px">466</div>
<div class="pb" style="left:941px;top:323px;width:77px;height:20px;padding-right:6px;line-height:21px">0.00</div>
<div class="pb" style="left:1020px;top:323px;width:33px;height:20px;padding-right:5px;line-height:21px">***</div>
<div class="t" style="left:805px;top:349px;">03</div>
<div class="pb" style="left:824px;top:344px;width:77px;height:20px;padding-right:6px;line-height:21px">0.00</div>
<div class="pb" style="left:902px;top:344px;width:34px;height:20px;padding-right:5px;line-height:21px">***</div>
<div class="pb" style="left:941px;top:344px;width:77px;height:20px;padding-right:6px;line-height:21px">0.00</div>
<div class="pb" style="left:1020px;top:344px;width:33px;height:20px;padding-right:5px;line-height:21px">***</div>
<div class="t" style="left:805px;top:370px;">04</div>
<div class="pb" style="left:824px;top:365px;width:77px;height:20px;padding-right:6px;line-height:21px">0.00</div>
<div class="pb" style="left:902px;top:365px;width:34px;height:20px;padding-right:5px;line-height:21px">***</div>
<div class="pb" style="left:941px;top:365px;width:77px;height:20px;padding-right:6px;line-height:21px">0.00</div>
<div class="pb" style="left:1020px;top:365px;width:33px;height:20px;padding-right:5px;line-height:21px">***</div>
<div class="t" style="left:805px;top:391px;">05</div>
<div class="pb" style="left:824px;top:386px;width:77px;height:20px;padding-right:6px;line-height:21px">0.00</div>
<div class="pb" style="left:902px;top:386px;width:34px;height:20px;padding-right:5px;line-height:21px">***</div>
<div class="pb" style="left:941px;top:386px;width:77px;height:20px;padding-right:6px;line-height:21px">0.00</div>
<div class="pb" style="left:1020px;top:386px;width:33px;height:20px;padding-right:5px;line-height:21px">***</div>
<div class="t" style="left:805px;top:412px;">06</div>
<div class="pb" style="left:824px;top:407px;width:77px;height:20px;padding-right:6px;line-height:21px">0.00</div>
<div class="pb" style="left:902px;top:407px;width:34px;height:20px;padding-right:5px;line-height:21px">***</div>
<div class="pb" style="left:941px;top:407px;width:77px;height:20px;padding-right:6px;line-height:21px">0.00</div>
<div class="pb" style="left:1020px;top:407px;width:33px;height:20px;padding-right:5px;line-height:21px">***</div>
<div class="t" style="left:805px;top:433px;">07</div>
<div class="pb" style="left:824px;top:428px;width:77px;height:20px;padding-right:6px;line-height:21px">0.00</div>
<div class="pb" style="left:902px;top:428px;width:34px;height:20px;padding-right:5px;line-height:21px">***</div>
<div class="pb" style="left:941px;top:428px;width:77px;height:20px;padding-right:6px;line-height:21px">0.00</div>
<div class="pb" style="left:1020px;top:428px;width:33px;height:20px;padding-right:5px;line-height:21px">***</div>
<div class="t" style="left:805px;top:454px;">08</div>
<div class="pb" style="left:824px;top:449px;width:77px;height:20px;padding-right:6px;line-height:21px">0.00</div>
<div class="pb" style="left:902px;top:449px;width:34px;height:20px;padding-right:5px;line-height:21px">***</div>
<div class="pb" style="left:941px;top:449px;width:77px;height:20px;padding-right:6px;line-height:21px">0.00</div>
<div class="pb" style="left:1020px;top:449px;width:33px;height:20px;padding-right:5px;line-height:21px">***</div>
<div class="t" style="left:805px;top:475px;">09</div>
<div class="pb" style="left:824px;top:470px;width:77px;height:20px;padding-right:6px;line-height:21px">0.00</div>
<div class="pb" style="left:902px;top:470px;width:34px;height:20px;padding-right:5px;line-height:21px">***</div>
<div class="pb" style="left:941px;top:470px;width:77px;height:20px;padding-right:6px;line-height:21px">0.00</div>
<div class="pb" style="left:1020px;top:470px;width:33px;height:20px;padding-right:5px;line-height:21px">***</div>
<div class="t" style="left:805px;top:496px;">10</div>
<div class="pb" style="left:824px;top:491px;width:77px;height:20px;padding-right:6px;line-height:21px">0.00</div>
<div class="pb" style="left:902px;top:491px;width:34px;height:20px;padding-right:5px;line-height:21px">***</div>
<div class="pb" style="left:941px;top:491px;width:77px;height:20px;padding-right:6px;line-height:21px">0.00</div>
<div class="pb" style="left:1020px;top:491px;width:33px;height:20px;padding-right:5px;line-height:21px">***</div>
<div class="t" style="left:805px;top:521px;">11</div>
<div class="pb" style="left:824px;top:516px;width:77px;height:20px;padding-right:6px;line-height:21px">0.00</div>
<div class="pb" style="left:902px;top:516px;width:34px;height:20px;padding-right:5px;line-height:21px">***</div>
<div class="pb" style="left:941px;top:516px;width:77px;height:20px;padding-right:6px;line-height:21px">0.00</div>
<div class="pb" style="left:1020px;top:516px;width:33px;height:20px;padding-right:5px;line-height:21px">***</div>
<div class="t" style="left:805px;top:542px;">12</div>
<div class="pb" style="left:824px;top:537px;width:77px;height:20px;padding-right:6px;line-height:21px">0.00</div>
<div class="pb" style="left:902px;top:537px;width:34px;height:20px;padding-right:5px;line-height:21px">***</div>
<div class="pb" style="left:941px;top:537px;width:77px;height:20px;padding-right:6px;line-height:21px">0.00</div>
<div class="pb" style="left:1020px;top:537px;width:33px;height:20px;padding-right:5px;line-height:21px">***</div>
<div class="t" style="left:805px;top:563px;">13</div>
<div class="pb" style="left:824px;top:558px;width:77px;height:20px;padding-right:6px;line-height:21px">0.00</div>
<div class="pb" style="left:902px;top:558px;width:34px;height:20px;padding-right:5px;line-height:21px">***</div>
<div class="pb" style="left:941px;top:558px;width:77px;height:20px;padding-right:6px;line-height:21px">0.00</div>
<div class="pb" style="left:1020px;top:558px;width:33px;height:20px;padding-right:5px;line-height:21px">***</div>
<div class="t" style="left:805px;top:584px;">14</div>
<div class="pb" style="left:824px;top:579px;width:77px;height:20px;padding-right:6px;line-height:21px">0.00</div>
<div class="pb" style="left:902px;top:579px;width:34px;height:20px;padding-right:5px;line-height:21px">***</div>
<div class="pb" style="left:941px;top:579px;width:77px;height:20px;padding-right:6px;line-height:21px">0.00</div>
<div class="pb" style="left:1020px;top:579px;width:33px;height:20px;padding-right:5px;line-height:21px">***</div>
<div class="t" style="left:805px;top:605px;">15</div>
<div class="pb" style="left:824px;top:600px;width:77px;height:20px;padding-right:6px;line-height:21px">0.00</div>
<div class="pb" style="left:902px;top:600px;width:34px;height:20px;padding-right:5px;line-height:21px">***</div>
<div class="pb" style="left:941px;top:600px;width:77px;height:20px;padding-right:6px;line-height:21px">0.00</div>
<div class="pb" style="left:1020px;top:600px;width:33px;height:20px;padding-right:5px;line-height:21px">***</div>
<div class="t" style="left:805px;top:626px;">16</div>
<div class="pb" style="left:824px;top:621px;width:77px;height:20px;padding-right:6px;line-height:21px">0.00</div>
<div class="pb" style="left:902px;top:621px;width:34px;height:20px;padding-right:5px;line-height:21px">***</div>
<div class="pb" style="left:941px;top:621px;width:77px;height:20px;padding-right:6px;line-height:21px">0.00</div>
<div class="pb" style="left:1020px;top:621px;width:33px;height:20px;padding-right:5px;line-height:21px">***</div>
<div class="t" style="left:805px;top:647px;">17</div>
<div class="pb" style="left:824px;top:642px;width:77px;height:20px;padding-right:6px;line-height:21px">0.00</div>
<div class="pb" style="left:902px;top:642px;width:34px;height:20px;padding-right:5px;line-height:21px">***</div>
<div class="pb" style="left:941px;top:642px;width:77px;height:20px;padding-right:6px;line-height:21px">0.00</div>
<div class="pb" style="left:1020px;top:642px;width:33px;height:20px;padding-right:5px;line-height:21px">***</div>
<div class="t" style="left:805px;top:668px;">18</div>
<div class="pb" style="left:824px;top:663px;width:77px;height:20px;padding-right:6px;line-height:21px">0.00</div>
<div class="pb" style="left:902px;top:663px;width:34px;height:20px;padding-right:5px;line-height:21px">***</div>
<div class="pb" style="left:941px;top:663px;width:77px;height:20px;padding-right:6px;line-height:21px">0.00</div>
<div class="pb" style="left:1020px;top:663px;width:33px;height:20px;padding-right:5px;line-height:21px">***</div>
<div class="t" style="left:805px;top:689px;">19</div>
<div class="pb" style="left:824px;top:684px;width:77px;height:20px;padding-right:6px;line-height:21px">0.00</div>
<div class="pb" style="left:902px;top:684px;width:34px;height:20px;padding-right:5px;line-height:21px">***</div>
<div class="pb" style="left:941px;top:684px;width:77px;height:20px;padding-right:6px;line-height:21px">0.00</div>
<div class="pb" style="left:1020px;top:684px;width:33px;height:20px;padding-right:5px;line-height:21px">***</div>
<div class="t" style="left:805px;top:710px;">20</div>
<div class="pb" style="left:824px;top:705px;width:77px;height:20px;padding-right:6px;line-height:21px">0.00</div>
<div class="pb" style="left:902px;top:705px;width:34px;height:20px;padding-right:5px;line-height:21px">***</div>
<div class="pb" style="left:941px;top:705px;width:77px;height:20px;padding-right:6px;line-height:21px">0.00</div>
<div class="pb" style="left:1020px;top:705px;width:33px;height:20px;padding-right:5px;line-height:21px">***</div>
<div class="a" style="left:0px;top:870px;width:1440px;height:7px;background:#f0f0f0"></div>
<div class="a" style="left:0px;top:870px;width:57px;height:6px;background:#f6f6f6;border-bottom:1px solid #a8a8a8"></div>
<div class="a" style="left:57px;top:870px;width:1px;height:5px;background:#404040"></div>
<div class="a" style="left:77px;top:870px;width:1205px;height:4px;background:#c4c4cc;border-left:1px solid #808080;border-bottom:1px solid #909098;border-radius:0 0 0 3px"></div>
<div class="a" style="left:0px;top:877px;width:1440px;height:1px;background:#a0a0a0"></div>
<div class="a" style="left:0px;top:878px;width:1440px;height:21px;background:#f0eeee"></div>
<div class="a" style="left:0px;top:898px;width:1440px;height:2px;background:#6a6a6a"></div>
<div class="a" style="left:1320px;top:879px;width:1px;height:19px;background:#d8d8d8"></div>
<div class="t" style="left:2px;top:884px;font-size:12px;color:#111">Pomocníka získate kliknutím na položku Témy Pomocníka z ponuky Pomocník.</div>
</body></html>
